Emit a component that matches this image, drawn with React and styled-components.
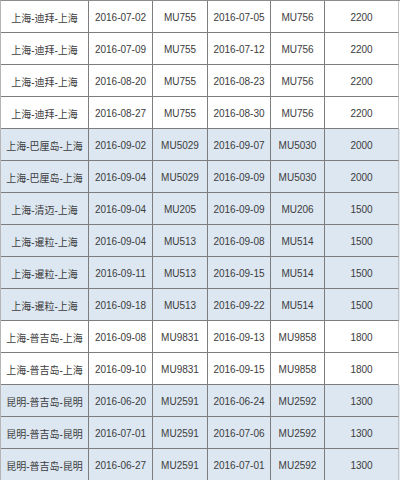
import React from "react";
import styled, { createGlobalStyle } from "styled-components";

const GlobalStyle = createGlobalStyle`
  html, body { margin: 0; padding: 0; background: #fff; }
  body { font-family: "Liberation Sans", "Noto Sans CJK SC", sans-serif; }
`;

const Table = styled.div`
  width: 399px;
  border-top: 1px solid #8c8c8c;
  border-left: 1px solid #b5b5b5;
`;

const Row = styled.div`
  display: grid;
  grid-template-columns: 88px 64px 55px 63px 54px 74px;
  height: 32px;
  background: ${(p) => (p.$blue ? "#dce7f2" : "#ffffff")};
`;

const Cell = styled.div`
  display: flex;
  align-items: center;
  justify-content: center;
  border-right: 1px solid ${(p) => (p.$last ? "#c4c4c4" : "#7d7d7d")};
  border-bottom: 1px solid #7d7d7d;
  color: #3c3c3c;
  font-size: 10px;
  font-family: "Liberation Sans", "Noto Sans CJK SC", sans-serif;
  white-space: nowrap;
  overflow: hidden;
  padding-top: 1px;
`;

const rows = [
  ["上海-迪拜-上海", "2016-07-02", "MU755", "2016-07-05", "MU756", "2200", false],
  ["上海-迪拜-上海", "2016-07-09", "MU755", "2016-07-12", "MU756", "2200", false],
  ["上海-迪拜-上海", "2016-08-20", "MU755", "2016-08-23", "MU756", "2200", false],
  ["上海-迪拜-上海", "2016-08-27", "MU755", "2016-08-30", "MU756", "2200", false],
  ["上海-巴厘岛-上海", "2016-09-02", "MU5029", "2016-09-07", "MU5030", "2000", true],
  ["上海-巴厘岛-上海", "2016-09-04", "MU5029", "2016-09-09", "MU5030", "2000", true],
  ["上海-清迈-上海", "2016-09-04", "MU205", "2016-09-09", "MU206", "1500", true],
  ["上海-暹粒-上海", "2016-09-04", "MU513", "2016-09-08", "MU514", "1500", true],
  ["上海-暹粒-上海", "2016-09-11", "MU513", "2016-09-15", "MU514", "1500", true],
  ["上海-暹粒-上海", "2016-09-18", "MU513", "2016-09-22", "MU514", "1500", true],
  ["上海-普吉岛-上海", "2016-09-08", "MU9831", "2016-09-13", "MU9858", "1800", false],
  ["上海-普吉岛-上海", "2016-09-10", "MU9831", "2016-09-15", "MU9858", "1800", false],
  ["昆明-普吉岛-昆明", "2016-06-20", "MU2591", "2016-06-24", "MU2592", "1300", true],
  ["昆明-普吉岛-昆明", "2016-07-01", "MU2591", "2016-07-06", "MU2592", "1300", true],
  ["昆明-普吉岛-昆明", "2016-06-27", "MU2591", "2016-07-01", "MU2592", "1300", true],
];

export default function App() {
  return (
    <>
      <GlobalStyle />
      <Table>
        {rows.map((r, i) => (
          <Row key={i} $blue={r[6]}>
            {r.slice(0, 6).map((c, j) => (
              <Cell key={j} $last={j === 5}>{c}</Cell>
            ))}
          </Row>
        ))}
      </Table>
    </>
  );
}
